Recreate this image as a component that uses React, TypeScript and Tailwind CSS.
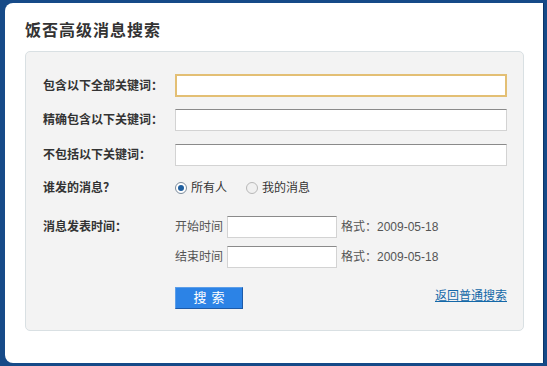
import React, { useState } from "react";

const font = { fontFamily: '"Liberation Sans", "Noto Sans CJK SC", sans-serif' };

function Radio({ checked, label, onClick }: { checked: boolean; label: string; onClick: () => void }) {
	return (
		<label className="flex items-center gap-[4px] cursor-pointer" onClick={onClick}>
			<span
				className={
					"w-[12px] h-[12px] rounded-full border flex items-center justify-center " +
					(checked ? "border-[#7a8a9a] bg-white" : "border-[#b8b8b8] bg-[#f0f0f0]")
				}
			>
				{checked && <span className="w-[6px] h-[6px] rounded-full bg-[#1f5f9f]" />}
			</span>
			<span className="text-[12px] text-[#333]">{label}</span>
		</label>
	);
}

export default function App() {
	const [who, setWho] = useState("all");

	return (
		<div className="w-[547px] h-[366px] bg-[#164a88] pt-[3px] pl-[5px] pr-[3px] pb-[3px] overflow-hidden" style={font}>
			<div className="h-full bg-white rounded-l-[8px] pl-[20px] pr-[20px] pt-[17px] border-r border-[#0c3468]">
				<h1 className="text-[16px] font-bold text-[#333] leading-[22px] tracking-[1px]">饭否高级消息搜索</h1>
				<div className="mt-[9px] w-[499px] h-[280px] bg-[#f3f3f3] border border-[#d9e0e3] rounded-[5px] pl-[17px] pt-[22px]">
					<div className="flex items-center h-[23px]">
						<span className="w-[132px] text-[12px] font-bold text-[#333]">包含以下全部关键词：</span>
						<input
							autoFocus
							className="w-[332px] h-[23px] bg-white border-2 border-[#e3bf74] outline-none px-[3px] text-[12px]"
						/>
					</div>
					<div className="flex items-center h-[22px] mt-[12px]">
						<span className="w-[132px] text-[12px] font-bold text-[#333]">精确包含以下关键词：</span>
						<input className="w-[332px] h-[22px] bg-white border border-[#d3d3d3] border-t-[#8a8a8a] outline-none px-[3px] text-[12px]" />
					</div>
					<div className="flex items-center h-[22px] mt-[13px]">
						<span className="w-[132px] text-[12px] font-bold text-[#333]">不包括以下关键词：</span>
						<input className="w-[332px] h-[22px] bg-white border border-[#d3d3d3] border-t-[#8a8a8a] outline-none px-[3px] text-[12px]" />
					</div>
					<div className="flex items-center h-[22px] mt-[11px]">
						<span className="w-[132px] text-[12px] font-bold text-[#333]">谁发的消息？</span>
						<div className="flex items-center gap-[19px]">
							<Radio checked={who === "all"} label="所有人" onClick={() => setWho("all")} />
							<Radio checked={who === "me"} label="我的消息" onClick={() => setWho("me")} />
						</div>
					</div>
					<div className="flex items-center h-[22px] mt-[17px]">
						<span className="w-[132px] text-[12px] font-bold text-[#333]">消息发表时间：</span>
						<span className="w-[52px] text-[12px] text-[#555]">开始时间</span>
						<input className="w-[110px] h-[22px] bg-white border border-[#d3d3d3] border-t-[#8a8a8a] outline-none px-[3px] text-[12px]" />
						<span className="ml-[4px] text-[12px] text-[#555]">格式：2009-05-18</span>
					</div>
					<div className="flex items-center h-[22px] mt-[8px]">
						<span className="w-[132px]" />
						<span className="w-[52px] text-[12px] text-[#555]">结束时间</span>
						<input className="w-[110px] h-[22px] bg-white border border-[#d3d3d3] border-t-[#8a8a8a] outline-none px-[3px] text-[12px]" />
						<span className="ml-[4px] text-[12px] text-[#555]">格式：2009-05-18</span>
					</div>
					<div className="flex items-center h-[22px] mt-[19px]">
						<span className="w-[132px]" />
						<button className="w-[68px] h-[22px] bg-[#2c83e6] border border-[#5c9ee8] border-r-[#1d5aa8] border-b-[#1d5aa8] text-white text-[13px] tracking-[5px] pl-[5px]">
							搜索
						</button>
						<a href="#" className="ml-auto mr-[16px] -mt-[4px] text-[12px] text-[#1468a8] underline">
							返回普通搜索
						</a>
					</div>
				</div>
			</div>
		</div>
	);
}
